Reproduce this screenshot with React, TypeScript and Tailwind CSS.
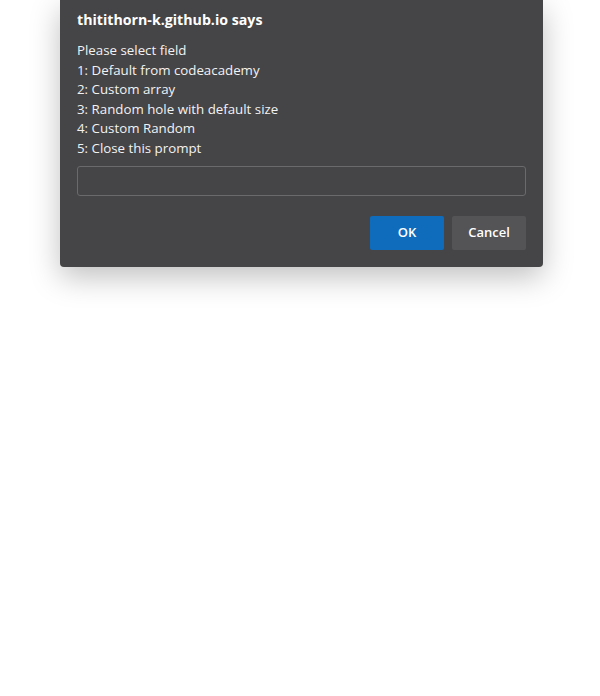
const lines = [
  "Please select field",
  "1: Default from codeacademy",
  "2: Custom array",
  "3: Random hole with default size",
  "4: Custom Random",
  "5: Close this prompt",
];

const PromptDialog = () => {
  return (
    <div className="ml-[60px] w-[483px] rounded-b-[4px] bg-[#454446] px-[17px] pt-[10px] pb-[17px] text-white shadow-[0_10px_30px_rgba(0,0,0,0.25)]">
      <div className="text-[14.2px] font-bold leading-[20px]">thitithorn-k.github.io says</div>

      <div className="mt-[11px] text-[13.3px] leading-[19.5px] text-[#f2f2f2]">
        {lines.map((line) => (
          <div key={line}>{line}</div>
        ))}
      </div>

      <input
        type="text"
        className="mt-[8px] block h-[30px] w-[449px] rounded-[3px] border border-[#6a696b] bg-[#454446] px-2 text-[14px] text-white outline-none"
      />

      <div className="mt-[20px] flex justify-end gap-[8px]">
        <button className="h-[34px] w-[74px] rounded-[2px] bg-[#0f6cbd] text-[13px] font-semibold text-white">
          OK
        </button>
        <button className="h-[34px] w-[74px] rounded-[2px] bg-[#545355] text-[13px] font-semibold text-white">
          Cancel
        </button>
      </div>
    </div>
  );
};

export default function App() {
  return (
    <div
      className="h-[696px] w-[600px] overflow-hidden bg-white"
      style={{ fontFamily: '"Open Sans", "Noto Sans", sans-serif' }}
    >
      <PromptDialog />
    </div>
  );
}
